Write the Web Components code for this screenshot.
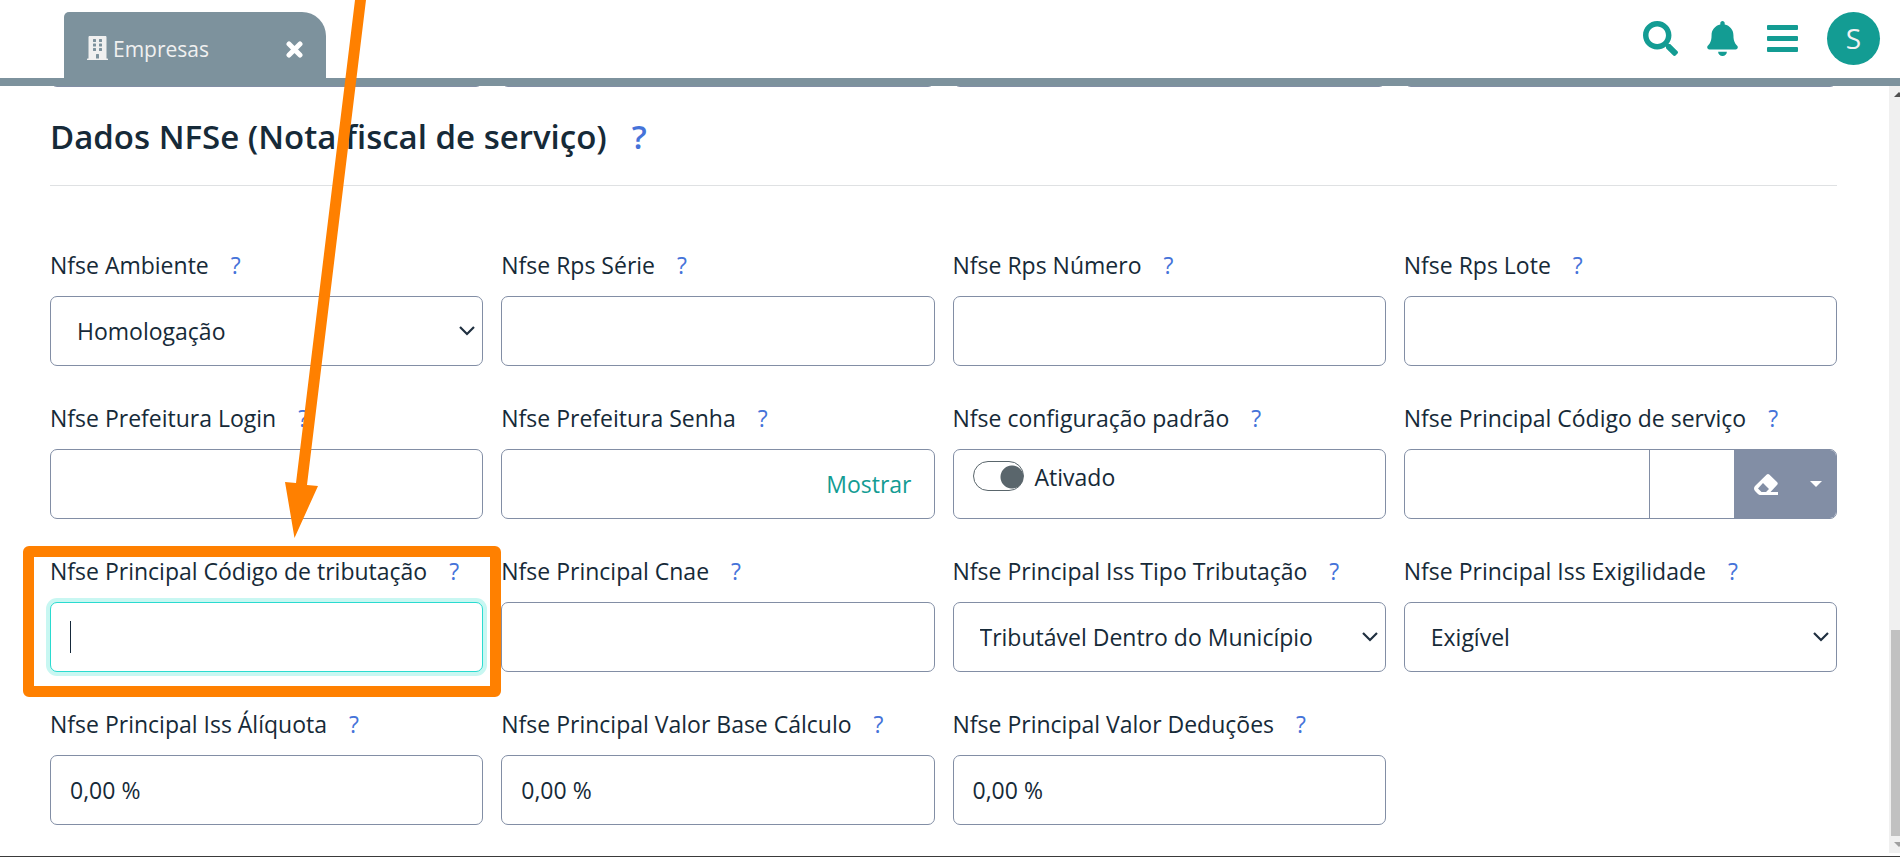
<!DOCTYPE html>
<html lang="pt-BR">
<head>
<meta charset="utf-8">
<meta name="viewport" content="width=device-width, initial-scale=1">
<title>Empresas</title>
<style>
  body { margin: 0; font-family: "Open Sans", "Noto Sans", sans-serif; font-size: 23px; line-height: 32px; color: #162a38; background: #fff; }
</style>
</head>
<body>
<app-shell>
  <app-header slot="header"><app-tab>Empresas</app-tab></app-header>
  <form-section heading="Dados NFSe (Nota fiscal de serviço)">
    <form-field kind="select" label="Nfse Ambiente" value="Homologação"></form-field>
    <form-field label="Nfse Rps Série"></form-field>
    <form-field label="Nfse Rps Número"></form-field>
    <form-field label="Nfse Rps Lote"></form-field>
    <form-field label="Nfse Prefeitura Login"></form-field>
    <form-field kind="password" label="Nfse Prefeitura Senha"></form-field>
    <form-field kind="switch" label="Nfse configuração padrão" value="Ativado"></form-field>
    <form-field kind="lookup" label="Nfse Principal Código de serviço"></form-field>
    <form-field active label="Nfse Principal Código de tributação"></form-field>
    <form-field label="Nfse Principal Cnae"></form-field>
    <form-field kind="select" label="Nfse Principal Iss Tipo Tributação" value="Tributável Dentro do Município"></form-field>
    <form-field kind="select" label="Nfse Principal Iss Exigilidade" value="Exigível"></form-field>
    <form-field label="Nfse Principal Iss Álíquota" value="0,00 %"></form-field>
    <form-field label="Nfse Principal Valor Base Cálculo" value="0,00 %"></form-field>
    <form-field label="Nfse Principal Valor Deduções" value="0,00 %"></form-field>
  </form-section>
</app-shell>
<pointer-arrow></pointer-arrow>

<script>
const define = (name, render) => customElements.define(name, class extends HTMLElement {
  connectedCallback() {
    if (this.shadowRoot) return;
    this.attachShadow({ mode: 'open' }).innerHTML = render(this);
  }
});

define('app-shell', () => `
<style>
  :host { display: flex; flex-direction: column; min-height: 100vh; box-sizing: border-box; border-bottom: 1px solid #3a3a3a; }
  .body { flex: 1; display: flex; }
  main { flex: 1; min-width: 0; padding: 0 52px 24px 50px; }
</style>
<slot name="header"></slot>
<div class="body"><main><slot></slot></main><scroll-rail></scroll-rail></div>`);

define('scroll-rail', () => `
<style>
  :host { display: flex; flex-direction: column; width: 11px; margin-bottom: 3px; background: #f0f0f0; overflow: hidden; }
  svg { display: block; flex: none; margin-left: 2px; }
  .space { flex: 527; }
  .thumb { flex: 206; margin-left: 2px; background: #c1c1c1; }
</style>
<svg width="17" height="17" viewBox="0 0 17 17"><path d="M3 11 8 6l5 5z" fill="#505050"/></svg>
<div class="space"></div><div class="thumb"></div>
<svg width="17" height="17" viewBox="0 0 17 17"><path d="M3 6 8 11l5-5z" fill="#a0a0a0"/></svg>`);

define('app-header', () => `
<style>
  :host { display: flex; align-items: flex-end; justify-content: space-between; height: 78px; padding: 0 20px 0 64px; border-bottom: 8px solid #7d929d; }
  nav { display: flex; align-items: center; gap: 29px; padding-bottom: 13px; }
  button { display: block; padding: 0; border: 0; background: none; color: #139c93; }
  svg { display: block; }
  .avatar { width: 53px; height: 53px; border-radius: 50%; background: #139c93; color: #f2f2f2; font: 28px/53px "Open Sans", sans-serif; }
</style>
<slot></slot>
<nav>
  <button aria-label="Pesquisar"><svg width="35" height="35" viewBox="0 0 512 512" fill="currentColor"><path d="M505 442.700 405.300 343c-4.500-4.500-10.600-7-17-7H372c27.600-35.300 44-79.700 44-128C416 93.100 322.900 0 208 0S0 93.100 0 208s93.100 208 208 208c48.300 0 92.700-16.400 128-44v16.300c0 6.400 2.500 12.500 7 17l99.700 99.700c9.400 9.400 24.600 9.400 33.900 0l28.300-28.300c9.400-9.400 9.400-24.600.1-34zM208 336c-70.700 0-128-57.200-128-128 0-70.700 57.200-128 128-128 70.700 0 128 57.200 128 128 0 70.700-57.200 128-128 128z"/></svg></button>
  <button aria-label="Notificações"><svg width="31" height="35" viewBox="0 0 448 512" fill="currentColor"><path d="M224 512c35.300 0 63.900-28.600 63.900-64H160.100c0 35.400 28.600 64 63.900 64zm215.400-149.700c-19.300-20.800-55.500-52-55.500-154.300 0-77.700-54.500-139.900-127.900-155.200V32c0-17.700-14.300-32-32-32s-32 14.300-32 32v20.800C118.600 68.100 64.100 130.300 64.100 208c0 102.300-36.200 133.500-55.500 154.300-6 6.500-8.700 14.200-8.600 21.700.1 16.400 13 32 32.100 32h383.800c19.100 0 32-15.600 32.100-32 .1-7.500-2.600-15.300-8.600-21.700z"/></svg></button>
  <button aria-label="Menu"><svg width="31" height="27" viewBox="0 0 31 27" fill="currentColor"><rect width="31" height="5" rx="1"/><rect y="11" width="31" height="5" rx="1"/><rect y="22" width="31" height="5" rx="1"/></svg></button>
  <button class="avatar" aria-label="Usuário S">S</button>
</nav>`);

define('app-tab', () => `
<style>
  :host { display: flex; align-items: center; box-sizing: border-box; width: 262px; height: 66px; padding: 5px 23px 0 23px; gap: 5px; border-radius: 5px 24px 0 0; background: #7d929d; color: #f0f0f0; font-size: 21px; }
  svg { display: block; }
  span { flex: 1; padding-top: 2px; }
  button { padding: 4px 0 0; border: 0; background: none; color: #fff; }
</style>
<svg width="21" height="24" viewBox="0 0 448 512" fill="currentColor"><path d="M436 480h-20V24c0-13.300-10.700-24-24-24H56C42.700 0 32 10.700 32 24v456H12c-6.600 0-12 5.400-12 12v20h448v-20c0-6.600-5.400-12-12-12zM128 76c0-6.600 5.400-12 12-12h40c6.600 0 12 5.400 12 12v40c0 6.600-5.400 12-12 12h-40c-6.600 0-12-5.400-12-12V76zm0 96c0-6.600 5.400-12 12-12h40c6.600 0 12 5.400 12 12v40c0 6.600-5.400 12-12 12h-40c-6.600 0-12-5.400-12-12v-40zm52 148h-40c-6.600 0-12-5.400-12-12v-40c0-6.600 5.400-12 12-12h40c6.600 0 12 5.400 12 12v40c0 6.600-5.400 12-12 12zm76 160h-64v-84c0-6.600 5.400-12 12-12h40c6.600 0 12 5.400 12 12v84zm64-172c0 6.600-5.400 12-12 12h-40c-6.600 0-12-5.400-12-12v-40c0-6.600 5.400-12 12-12h40c6.600 0 12 5.400 12 12v40zm0-96c0 6.600-5.400 12-12 12h-40c-6.600 0-12-5.400-12-12v-40c0-6.600 5.400-12 12-12h40c6.600 0 12 5.400 12 12v40zm0-96c0 6.600-5.400 12-12 12h-40c-6.600 0-12-5.400-12-12V76c0-6.600 5.400-12 12-12h40c6.600 0 12 5.400 12 12v40z"/></svg>
<span><slot></slot></span>
<button aria-label="Fechar"><svg width="17" height="17" viewBox="0 0 17 17"><path d="m3 3 11 11M14 3 3 14" stroke="currentColor" stroke-width="5" stroke-linecap="round"/></svg></button>`);

define('form-section', el => `
<style>
  :host { display: block; }
  .previous, .grid { display: grid; grid-template-columns: repeat(4, minmax(0, 1fr)); column-gap: 18px; }
  .previous { height: 1px; overflow: hidden; align-items: end; align-content: end; }
  .previous i { height: 70px; box-sizing: border-box; border: 1px solid #828ea5; border-radius: 7px; }
  header { display: flex; align-items: center; gap: 25px; padding: 26px 0 24px; border-bottom: 1px solid #dfe1e3; }
  h2, a { margin: 0; font-size: 33px; line-height: 48px; font-weight: 600; }
  a { color: #4573d9; text-decoration: none; }
  .grid { row-gap: 36px; padding-top: 63px; }
</style>
<div class="previous"><i></i><i></i><i></i><i></i></div>
<header><h2>${el.getAttribute('heading')}</h2><a href="#ajuda">?</a></header>
<div class="grid"><slot></slot></div>`);

const controls = {
  text: v => `<input id="c" class="box" type="text" value="${v}">`,
  select: v => `<select id="c" class="box"><option>${v}</option></select>`,
  password: () => `<div class="box group"><input id="c" type="password"><button class="show" type="button">Mostrar</button></div>`,
  switch: v => `<div class="box toggle"><input id="c" type="checkbox" role="switch" checked><label for="c">${v}</label></div>`,
  lookup: () => `<div class="box group"><input id="c" type="text"><input class="code" type="text" aria-label="Código">
    <button class="tool" type="button" aria-label="Limpar"><svg width="24" height="21" viewBox="0 0 24 21"><path fill="#fff" fill-rule="evenodd" d="M1 12 12.500.700q1.500-1.300 3 0L23 8q1.500 1.500 0 3l-6.500 7H24v3H6q-1 0-2-1l-3-3q-2-2.500 0-5zm3 2.500L7.500 18h4.500l3-3-6-6z"/></svg></button>
    <button class="tool more" type="button" aria-label="Mais opções"><svg width="12" height="6" viewBox="0 0 12 6"><path fill="#fff" d="M0 0h12L6 6z"/></svg></button></div>`
};

define('form-field', el => `
<style>
  :host { display: block; position: relative; }
  .caption { display: flex; gap: 22px; height: 32px; margin-bottom: 15px; white-space: nowrap; }
  a { color: #4573d9; text-decoration: none; }
  input, select, button { font: inherit; color: inherit; margin: 0; }
  .box { display: block; box-sizing: border-box; width: 100%; height: 70px; padding: 0 19px; border: 1px solid #828ea5; border-radius: 7px; background: #fff; outline: 0; }
  select.box { appearance: none; padding: 0 26px; background: #fff url("data:image/svg+xml,%3Csvg xmlns='http://www.w3.org/2000/svg' width='16' height='10' viewBox='0 0 16 10'%3E%3Cpath d='m1 1 7 7 7-7' fill='none' stroke='%23203040' stroke-width='2.200'/%3E%3C/svg%3E") no-repeat right 7px center; }
  .group { display: flex; padding: 0; overflow: hidden; }
  .group input { flex: 1; min-width: 0; padding: 0 19px; border: 0; outline: 0; background: none; }
  .group .code { flex: 0 0 85px; box-sizing: border-box; border-left: 1px solid #828ea5; }
  button { border: 0; background: none; }
  .show { padding: 0 22px; color: #139c93; }
  .tool { display: flex; align-items: center; justify-content: center; width: 64px; padding: 0; background: #828ea5; }
  .more { width: 38px; padding-right: 2px; }
  .toggle { display: flex; align-items: flex-start; gap: 11px; padding: 11px 19px; }
  .toggle input { appearance: none; width: 51px; height: 30px; border: 1px solid #5a666c; border-radius: 15px; background: radial-gradient(circle at 38px 15px, #5a666c 11px, transparent 12px); }
  :host([active]) .box { border-color: #2adbd0; box-shadow: 0 0 0 4px #c8f7f2; background: linear-gradient(#16293a, #16293a) 19px center / 1px 32px no-repeat #fff; }
  :host([active])::after { content: ""; position: absolute; inset: -9px -18px -25px -27px; border: 11px solid #ff8000; border-radius: 6px; pointer-events: none; }
</style>
<div class="caption"><label for="c">${el.getAttribute('label')}</label><a href="#ajuda">?</a></div>
${controls[el.getAttribute('kind') || 'text'](el.getAttribute('value') || '')}`);

define('pointer-arrow', () => `
<style>
  :host { position: absolute; top: 0; left: 280px; pointer-events: none; }
  svg { display: block; }
</style>
<svg width="90" height="540" viewBox="280 0 90 540" fill="#ff8000"><path d="M355 0h11L307 485l11 1-23.500 52L285 482l11 1z"/></svg>`);
</script>
</body>
</html>
